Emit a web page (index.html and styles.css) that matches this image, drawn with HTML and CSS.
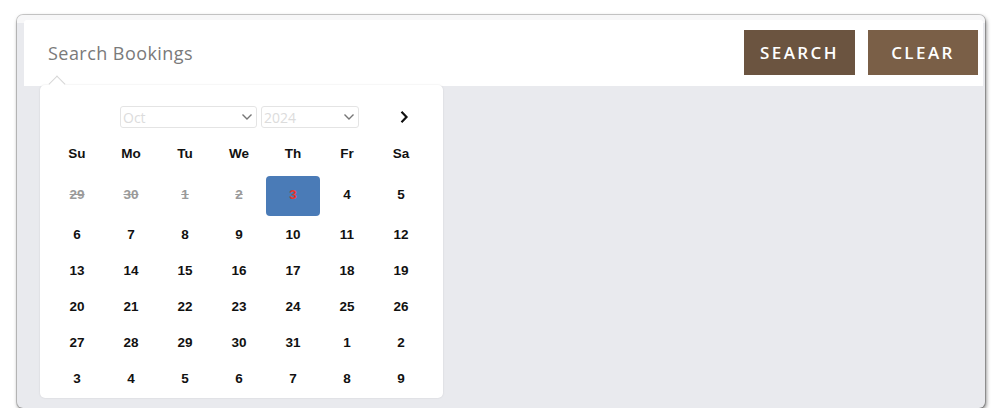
FILE: index.html
```html
<!DOCTYPE html>
<html>
<head>
<meta charset="utf-8">
<link rel="stylesheet" href="styles.css">
</head>
<body>
<div class="frame">
  <div class="header">
    <div class="search-input">Search Bookings</div>
    <div class="actions">
      <button class="btn btn-search">SEARCH</button>
      <button class="btn btn-clear">CLEAR</button>
    </div>
  </div>
  <div class="body"></div>
  <div class="picker">
    <div class="caret"></div>
    <div class="picker-nav">
      <div class="sel sel-month"><span>Oct</span><svg width="12" height="8" viewBox="0 0 12 8"><path d="M1.5 1.5 L6 6 L10.5 1.5" fill="none" stroke="#555" stroke-width="1.4"/></svg></div>
      <div class="sel sel-year"><span>2024</span><svg width="12" height="8" viewBox="0 0 12 8"><path d="M1.5 1.5 L6 6 L10.5 1.5" fill="none" stroke="#555" stroke-width="1.4"/></svg></div>
      <div class="next"><svg width="10" height="14" viewBox="0 0 10 14"><path d="M2.5 1.8 L7.5 7 L2.5 12.2" fill="none" stroke="#111" stroke-width="2.2"/></svg></div>
    </div>
    <div class="grid">
      <div class="dn">Su</div><div class="dn">Mo</div><div class="dn">Tu</div><div class="dn">We</div><div class="dn">Th</div><div class="dn">Fr</div><div class="dn">Sa</div>
      <div class="d r1 off">29</div><div class="d r1 off">30</div><div class="d r1 off">1</div><div class="d r1 off">2</div><div class="d r1 cur">3</div><div class="d r1">4</div><div class="d r1">5</div>
      <div class="d">6</div><div class="d">7</div><div class="d">8</div><div class="d">9</div><div class="d">10</div><div class="d">11</div><div class="d">12</div>
      <div class="d">13</div><div class="d">14</div><div class="d">15</div><div class="d">16</div><div class="d">17</div><div class="d">18</div><div class="d">19</div>
      <div class="d">20</div><div class="d">21</div><div class="d">22</div><div class="d">23</div><div class="d">24</div><div class="d">25</div><div class="d">26</div>
      <div class="d">27</div><div class="d">28</div><div class="d">29</div><div class="d">30</div><div class="d">31</div><div class="d">1</div><div class="d">2</div>
      <div class="d">3</div><div class="d">4</div><div class="d">5</div><div class="d">6</div><div class="d">7</div><div class="d">8</div><div class="d">9</div>
    </div>
  </div>
</div>
</body>
</html>
```
FILE: styles.css
```css
html, body {
  margin: 0;
  padding: 0;
  background: #ffffff;
}
body {
  padding: 15px 15px 0 17px;
  font-family: "Liberation Sans", Arial, sans-serif;
}
.frame {
  position: relative;
  width: 968px;
  height: 393px;
  border-radius: 6px;
  background: #e9eaee;
  box-shadow: 0 0 0 1px rgba(0,0,0,0.18), 1px 2px 4px rgba(0,0,0,0.55);
  overflow: hidden;
  display: flex;
  flex-direction: column;
}
.frame::before {
  content: "";
  position: absolute;
  left: 0; right: 0; top: 0;
  height: 8px;
  background: #f7f7f8;
}
.header {
  position: relative;
  margin: 5px 2px 0 7px;
  height: 66px;
  background: #ffffff;
  border-radius: 3px 3px 0 0;
  display: flex;
  align-items: center;
  justify-content: space-between;
}
.search-input {
  margin-left: 24px;
  font-family: "Open Sans", "Noto Sans", sans-serif;
  font-size: 18px;
  letter-spacing: 0.45px;
  color: #7a7a7a;
}
.actions {
  display: flex;
  gap: 13px;
  margin-right: 5px;
  margin-top: -1px;
}
.btn {
  border: none;
  color: #ffffff;
  font-family: "Open Sans", "Noto Sans", sans-serif;
  font-weight: 600;
  font-size: 17px;
  letter-spacing: 2.4px;
  height: 45px;
  padding: 0;
}
.btn-search {
  width: 111px;
  background: #6b5440;
}
.btn-clear {
  width: 110px;
  background: #7a5f47;
}
.body {
  flex: 1;
}
.picker {
  position: absolute;
  left: 23px;
  top: 70px;
  width: 403px;
  height: 313px;
  background: #ffffff;
  border-radius: 5px;
  box-shadow: 0 0 2px rgba(0,0,0,0.12);
}
.caret {
  position: absolute;
  left: 11px;
  top: -7px;
  width: 11px;
  height: 11px;
  background: #ffffff;
  border-left: 1px solid #d6d6d6;
  border-top: 1px solid #d6d6d6;
  transform: rotate(45deg);
}
.picker-nav {
  display: flex;
  align-items: center;
  margin-top: 21px;
  padding-left: 80px;
  height: 22px;
}
.sel {
  box-sizing: border-box;
  height: 22px;
  border: 1px solid #e4e4e4;
  border-radius: 3px;
  display: flex;
  align-items: center;
  justify-content: space-between;
  padding: 0 3px 0 2px;
  font-family: "Open Sans", "Noto Sans", sans-serif;
  font-size: 14px;
  color: #dcdcdc;
}
.sel svg { opacity: 0.8; }
.sel-month { width: 137px; }
.sel-year { width: 98px; margin-left: 4px; }
.next {
  margin-left: 40px;
  display: flex;
  align-items: center;
}
.grid {
  display: grid;
  grid-template-columns: repeat(7, 54px);
  margin-left: 10px;
  margin-top: 10px;
}
.dn, .d {
  display: flex;
  align-items: center;
  justify-content: center;
  font-weight: 700;
  font-size: 13.5px;
  color: #111111;
}
.dn {
  height: 30px;
  margin-bottom: 8px;
}
.d {
  height: 36px;
}
.d.r1 {
  height: 40px;
  padding-bottom: 4px;
  box-sizing: border-box;
}
.d.off {
  color: #9a9a9a;
  text-decoration: line-through;
}
.d.cur {
  background: #4a7bb7;
  color: #e8352b;
  border-radius: 4px;
}
```
